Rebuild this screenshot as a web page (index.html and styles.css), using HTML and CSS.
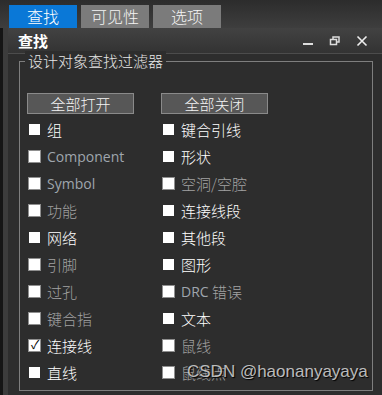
FILE: index.html
```html
<!DOCTYPE html>
<html lang="zh-CN">
<head>
    <meta charset="UTF-8">
    <title>查找</title>
    <link rel="stylesheet" href="styles.css">
</head>
<body>
    <div class="tabs">
        <div class="tab active">查找</div>
        <div class="tab">可见性</div>
        <div class="tab">选项</div>
    </div>

    <div class="panel">
        <div class="titlebar">
            <span class="title">查找</span>
            <div class="controls">
                <svg width="12" height="12" viewBox="0 0 12 12"><rect x="1" y="8" width="10" height="2" fill="#ddd"/></svg>
                <svg width="12" height="12" viewBox="0 0 12 12" fill="none" stroke="#ddd" stroke-width="1.5"><rect x="1.5" y="4.5" width="6" height="5"/><path d="M4 4.5V2h6v5H7.5"/></svg>
                <svg width="12" height="12" viewBox="0 0 12 12" stroke="#eee" stroke-width="1.6"><path d="M1.5 1.5l9 9M10.5 1.5l-9 9"/></svg>
            </div>
        </div>

        <div class="content">
            <div class="group">
                <span class="legend">设计对象查找过滤器</span>
                <div class="buttons">
                    <div class="btn">全部打开</div>
                    <div class="btn">全部关闭</div>
                </div>
                <div class="grid">
                    <div class="item"><span class="box fill"></span>组</div>
                    <div class="item"><span class="box fill"></span>键合引线</div>
                    <div class="item off"><span class="box"></span><span class="latin">Component</span></div>
                    <div class="item"><span class="box fill"></span>形状</div>
                    <div class="item off"><span class="box"></span><span class="latin">Symbol</span></div>
                    <div class="item off"><span class="box"></span>空洞/空腔</div>
                    <div class="item off"><span class="box"></span>功能</div>
                    <div class="item"><span class="box fill"></span>连接线段</div>
                    <div class="item"><span class="box fill"></span>网络</div>
                    <div class="item"><span class="box fill"></span>其他段</div>
                    <div class="item off"><span class="box"></span>引脚</div>
                    <div class="item"><span class="box fill"></span>图形</div>
                    <div class="item off"><span class="box"></span>过孔</div>
                    <div class="item off"><span class="box"></span><span class="latin">DRC</span>&nbsp;错误</div>
                    <div class="item off"><span class="box"></span>键合指</div>
                    <div class="item"><span class="box fill"></span>文本</div>
                    <div class="item"><span class="box check">&#10003;</span>连接线</div>
                    <div class="item off"><span class="box"></span>鼠线</div>
                    <div class="item"><span class="box fill"></span>直线</div>
                    <div class="item off"><span class="box"></span>鼠线点</div>
                </div>
            </div>
        </div>
    </div>

    <div class="watermark">CSDN @haonanyayaya</div>
</body>
</html>
```

FILE: styles.css
```css
body {
    margin: 0;
    width: 382px;
    height: 395px;
    overflow: hidden;
    background-color: #151515;
    font-family: "Noto Sans CJK SC", "Noto Sans", sans-serif;
    font-weight: 300;
    color: #fff;
    position: relative;
}
.tabs {
    display: flex;
    gap: 4px;
    height: 28px;
    padding: 5px 0 0 9px;
    box-sizing: border-box;
    background: linear-gradient(#2c2c2c, #3e3e3e);
}
.tab {
    width: 68px;
    height: 23px;
    background-color: #7b7b7b;
    color: #f4f4f4;
    font-size: 16px;
    line-height: 23px;
    text-align: center;
}
.tab.active {
    background-color: #0a78d7;
    color: #fff;
}
.panel {
    margin-left: 3px;
    border-left: 5px solid #3c3c3c;
    height: 367px;
    background-color: #2d2d2d;
}
.titlebar {
    height: 25px;
    display: flex;
    align-items: center;
    justify-content: space-between;
    padding: 0 14px 0 10px;
    background: linear-gradient(#424242, #333);
    border-bottom: 1px solid #4c4c4c;
}
.title {
    font-size: 15px;
    font-weight: bold;
}
.controls {
    display: flex;
    gap: 15px;
    align-items: center;
    padding-top: 1px;
}
.content {
    padding: 7px 9px 0 11px;
}
.group {
    position: relative;
    border: 1px solid #7e7e7e;
    height: 330px;
    padding: 31px 0 0 7px;
    box-sizing: border-box;
}
.legend {
    position: absolute;
    left: 5px;
    top: -11px;
    padding: 0 3px;
    background-color: #2d2d2d;
    color: #e6e6e6;
    font-size: 15px;
    line-height: 20px;
}
.buttons {
    display: flex;
    gap: 27px;
}
.btn {
    width: 107px;
    height: 21px;
    box-sizing: border-box;
    background-color: #575757;
    border: 1px solid #8a8a8a;
    color: #f4f4f4;
    font-size: 15px;
    line-height: 19px;
    text-align: center;
}
.grid {
    display: grid;
    grid-template-columns: 134px 134px;
    grid-auto-rows: 27px;
    margin-top: 2px;
    margin-left: 1px;
}
.item {
    display: flex;
    align-items: center;
    font-size: 15px;
    color: #fff;
}
.item.off {
    color: #a3a3a3;
}
.latin {
    font-family: "Open Sans", "Noto Sans", sans-serif;
    font-weight: 400;
    font-size: 14px;
    color: #9fa6ad;
}
.box {
    width: 13px;
    height: 13px;
    box-sizing: border-box;
    margin-right: 6px;
    background-color: #fff;
    border: 1px solid #8f8f8f;
    flex-shrink: 0;
}
.box.fill {
    border: 1px solid #2d2d2d;
}
.box.check {
    color: #000;
    font-size: 12px;
    line-height: 11px;
    text-align: center;
    font-family: "DejaVu Sans", sans-serif;
}
.watermark {
    position: absolute;
    left: 187px;
    top: 362px;
    font-family: "Liberation Sans", sans-serif;
    font-weight: 400;
    font-size: 17px;
    color: rgba(230, 230, 230, 0.8);
    text-shadow: 1px 1px 1px #000;
}
```
